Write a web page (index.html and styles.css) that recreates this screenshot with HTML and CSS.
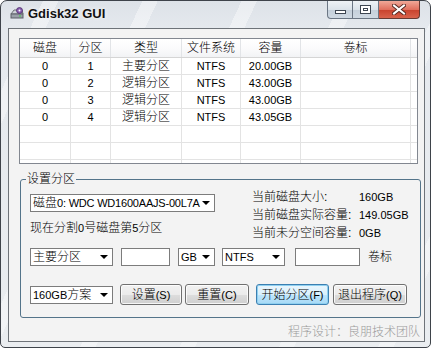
FILE: index.html
```html
<!DOCTYPE html>
<html>
<head>
<meta charset="utf-8">
<title>Gdisk32 GUI</title>
<link rel="stylesheet" href="styles.css">
</head>
<body>
<div class="window">
  <div class="titlebar">
    <svg class="appicon" width="14" height="13" viewBox="0 0 14 13">
      <path d="M1 7 L4 3 L12 3 L13 7 Z" fill="#cfd3d8" stroke="#6b6f75" stroke-width="1"/>
      <rect x="1" y="7" width="12" height="4" fill="#9aa0a8" stroke="#5d6168" stroke-width="1"/>
      <rect x="9" y="8.5" width="2" height="1" fill="#3fd04a"/>
      <circle cx="9.5" cy="3.5" r="3" fill="#8a5fb0" stroke="#4c2f6b" stroke-width="0.8"/>
      <circle cx="9.5" cy="3.5" r="1" fill="#fff"/>
    </svg>
    <span class="title">Gdisk32 GUI</span>
    <div class="caption">
      <div class="cbtn cmin"><span class="g-min"></span></div>
      <div class="cbtn cmax"><span class="g-max"></span></div>
      <div class="cbtn cclose">
        <svg width="14" height="11" viewBox="0 0 14 11">
          <path d="M2 1.5 L12 9.5 M12 1.5 L2 9.5" stroke="#5a2a22" stroke-width="4" stroke-linecap="square"/>
          <path d="M2 1.5 L12 9.5 M12 1.5 L2 9.5" stroke="#fff" stroke-width="2" stroke-linecap="square"/>
        </svg>
      </div>
    </div>
  </div>

  <div class="client">
    <div class="listview">
      <div class="lv-row lv-head">
        <div>磁盘</div><div>分区</div><div>类型</div><div>文件系统</div><div>容量</div><div>卷标</div><div></div>
      </div>
      <div class="lv-row"><div class="lt">0</div><div class="lt">1</div><div>主要分区</div><div class="lt">NTFS</div><div class="lt">20.00GB</div><div></div><div></div></div>
      <div class="lv-row"><div class="lt">0</div><div class="lt">2</div><div>逻辑分区</div><div class="lt">NTFS</div><div class="lt">43.00GB</div><div></div><div></div></div>
      <div class="lv-row"><div class="lt">0</div><div class="lt">3</div><div>逻辑分区</div><div class="lt">NTFS</div><div class="lt">43.00GB</div><div></div><div></div></div>
      <div class="lv-row"><div class="lt">0</div><div class="lt">4</div><div>逻辑分区</div><div class="lt">NTFS</div><div class="lt">43.05GB</div><div></div><div></div></div>
      <div class="lv-row"><div></div><div></div><div></div><div></div><div></div><div></div><div></div></div>
      <div class="lv-row"><div></div><div></div><div></div><div></div><div></div><div></div><div></div></div>
      <div class="lv-row"><div></div><div></div><div></div><div></div><div></div><div></div><div></div></div>
    </div>

    <div class="group">
      <span class="legend">设置分区</span>
      <div class="g-top">
        <div class="g-left">
          <div class="combo w-disk"><span class="ctext">磁盘<span class="lt disktext">0: WDC WD1600AAJS-00L7A</span></span><span class="arrow"></span></div>
          <div class="now">现在分割<span class="lt">0</span>号磁盘第<span class="lt">5</span>分区</div>
        </div>
        <div class="info">
          <span>当前磁盘大小:</span><span class="lt">160GB</span>
          <span>当前磁盘实际容量:</span><span class="lt">149.05GB</span>
          <span>当前未分空间容量:</span><span class="lt">0GB</span>
        </div>
      </div>
      <div class="g-row2">
        <div class="combo w-type"><span class="ctext">主要分区</span><span class="arrow"></span></div>
        <div class="field w-size"></div>
        <div class="combo w-unit"><span class="ctext lt">GB</span><span class="arrow"></span></div>
        <div class="combo w-fs"><span class="ctext lt">NTFS</span><span class="arrow"></span></div>
        <div class="field w-label"></div>
        <span class="lbl">卷标</span>
      </div>
      <div class="g-row3">
        <div class="combo w-plan"><span class="ctext"><span class="lt">160GB</span>方案</span><span class="arrow"></span></div>
        <div class="btn b-set">设置<span class="lt">(S)</span></div>
        <div class="btn b-reset">重置<span class="lt">(C)</span></div>
        <div class="btn b-start default">开始分区<span class="lt">(F)</span></div>
        <div class="btn b-exit">退出程序<span class="lt">(Q)</span></div>
      </div>
    </div>

    <div class="footer">程序设计：良朋技术团队</div>
  </div>
</div>
</body>
</html>
```

FILE: styles.css
```css
* { box-sizing: border-box; }
html, body { margin: 0; padding: 0; background: #ffffff; }
body {
  font-family: "Liberation Sans", "Noto Sans CJK SC", sans-serif;
  font-size: 12px;
  font-weight: 300;
  color: #000;
}
.lt { font-size: 11px; }

.window {
  width: 431px;
  height: 348px;
  border: 1px solid #3e434a;
  border-radius: 7px 7px 5px 5px;
  background:
    repeating-linear-gradient(115deg, rgba(255,255,255,0) 0 38px, rgba(255,255,255,0.4) 38px 52px, rgba(255,255,255,0) 52px 90px),
    linear-gradient(180deg, #dde2e8 0, #e5e9ee 28px, #eaedf0 100%);
  display: flex;
  flex-direction: column;
  overflow: hidden;
}

.titlebar {
  height: 27px;
  display: flex;
  align-items: flex-start;
  flex-shrink: 0;
}
.appicon { margin: 6px 0 0 9px; }
.title {
  margin: 5px 0 0 4px;
  font-family: "Liberation Sans", sans-serif;
  font-weight: bold;
  font-size: 13px;
  line-height: 16px;
  color: #111;
  text-shadow: 0 0 4px rgba(255,255,255,0.9);
}
.caption {
  margin-left: auto;
  margin-right: 10px;
  display: flex;
  height: 18px;
}
.cbtn {
  height: 18px;
  border: 1px solid #6b7684;
  border-top: none;
  display: flex;
  align-items: center;
  justify-content: center;
}
.cmin {
  width: 26px;
  border-radius: 0 0 0 4px;
  background: linear-gradient(180deg, #eef2f6 0, #dbe3ea 50%, #c4cfda 51%, #cfd9e3 100%);
}
.cmax {
  width: 26px;
  border-left: none;
  background: linear-gradient(180deg, #eef2f6 0, #dbe3ea 50%, #c4cfda 51%, #cfd9e3 100%);
}
.cclose {
  width: 41px;
  border-left: none;
  border-color: #6a3a32;
  border-radius: 0 0 4px 0;
  background: linear-gradient(180deg, #f0a898 0, #e0705e 50%, #c8412c 51%, #d9634c 100%);
}
.g-min {
  width: 11px;
  height: 4px;
  margin-top: 5px;
  background: #fff;
  border: 1px solid #3d4652;
}
.g-max {
  width: 11px;
  height: 9px;
  background: #fff;
  border: 1px solid #3d4652;
  box-shadow: inset 0 0 0 2px #fff, inset 0 0 0 3px #3d4652;
}

.client {
  margin: 0 5px 0 7px;
  width: 417px;
  height: 314px;
  border: 1px solid #6e7379;
  background: #f3f3f3;
  display: flex;
  flex-direction: column;
  flex-shrink: 0;
}

.listview {
  margin: 9px 0 0 10px;
  width: 399px;
  height: 126px;
  border: 1px solid #828790;
  background: #fff;
  overflow: hidden;
  flex-shrink: 0;
}
.lv-row {
  display: grid;
  grid-template-columns: 51px 40px 71px 59px 60px 110px 6px;
  height: 17px;
  border-bottom: 1px solid #e3e3e3;
}
.lv-row > div {
  border-right: 1px solid #e3e3e3;
  text-align: center;
  line-height: 16px;
  white-space: nowrap;
  overflow: hidden;
}
.lv-row > div:last-child { border-right: none; }
.lv-head {
  height: 19px;
  border-bottom: 1px solid #d5d5d5;
  background: linear-gradient(180deg, #ffffff 0, #fbfbfc 50%, #f2f3f5 100%);
}
.lv-head > div {
  line-height: 18px;
  border-right-color: #e2e4e7;
}

.group {
  position: relative;
  margin: 15px 0 0 11px;
  width: 401px;
  height: 139px;
  border: 1px solid #54748a;
  border-radius: 3px;
  padding: 8px 0 0 9px;
  flex-shrink: 0;
}
.legend {
  position: absolute;
  left: 5px;
  top: -9px;
  padding: 0 1px;
  line-height: 16px;
  background: #f3f3f3;
}

.g-top {
  display: flex;
  height: 54px;
}
.g-left { width: 222px; }
.now {
  margin-top: 7px;
  line-height: 18px;
}
.info {
  display: grid;
  grid-template-columns: 107px auto;
  line-height: 18px;
  white-space: nowrap;
}

.combo {
  height: 18px;
  background: #fff;
  border: 1px solid #7c7c7c;
  display: flex;
  align-items: center;
  justify-content: space-between;
  padding: 0 4px 0 2px;
  white-space: nowrap;
  overflow: hidden;
}
.ctext { line-height: 16px; }
.disktext { letter-spacing: -0.2px; }
.arrow {
  width: 0;
  height: 0;
  border-left: 4px solid transparent;
  border-right: 4px solid transparent;
  border-top: 4px solid #000;
  flex-shrink: 0;
}
.field {
  height: 18px;
  background: #fff;
  border: 1px solid #7c7c7c;
}
.w-disk { margin-top: 6px; width: 185px; }

.g-row2 {
  margin-top: 6px;
  height: 18px;
  display: flex;
  align-items: center;
}
.w-type { width: 83px; }
.w-size { width: 49px; margin-left: 8px; }
.w-unit { width: 37px; margin-left: 8px; }
.w-fs { width: 63px; margin-left: 7px; }
.w-label { width: 65px; margin-left: 10px; }
.lbl { margin-left: 8px; line-height: 18px; }

.g-row3 {
  margin-top: 18px;
  height: 21px;
  display: flex;
  align-items: center;
}
.w-plan { width: 83px; }
.btn {
  height: 21px;
  border: 1px solid #707070;
  border-radius: 3px;
  background: linear-gradient(180deg, #f2f2f2 0, #ebebeb 50%, #dddddd 51%, #cfcfcf 100%);
  box-shadow: inset 0 0 0 1px rgba(255,255,255,0.8);
  display: flex;
  align-items: center;
  justify-content: center;
  line-height: 16px;
  white-space: nowrap;
}
.b-set { width: 62px; margin-left: 7px; }
.b-reset { width: 64px; margin-left: 3px; }
.b-start { width: 73px; margin-left: 7px; }
.b-exit { width: 74px; margin-left: 4px; }
.btn.default {
  border-color: #3c7fb1;
  background: linear-gradient(180deg, #eaf6fd 0, #d9f0fc 50%, #bee6fd 51%, #a7d9f5 100%);
  box-shadow: inset 0 0 0 1px #8fd0f0;
}

.footer {
  margin-top: 7px;
  padding-right: 4px;
  text-align: right;
  line-height: 14px;
  color: #9a9a9a;
}
```
